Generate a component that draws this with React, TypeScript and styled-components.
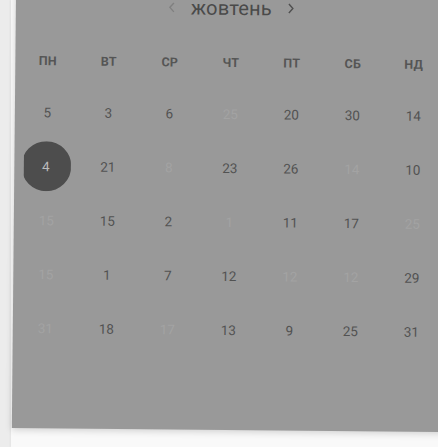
import React from "react";
import styled, { createGlobalStyle } from "styled-components";

const Global = createGlobalStyle`
  html, body { margin: 0; padding: 0; }
  body {
    background: #ececec;
    font-family: Roboto, "Liberation Sans", Arial, sans-serif;
    width: 438px;
    height: 447px;
    overflow: hidden;
  }
`;

const Page = styled.div`
  width: 438px;
  height: 447px;
  overflow: hidden;
  display: flex;
`;

const Sheet = styled.div`
  margin-left: 11px;
  flex: 1;
  background: #f9f9f9;
  box-shadow: -1px 0 2px rgba(0, 0, 0, 0.04);
  display: flex;
  flex-direction: column;
`;

const Panel = styled.div`
  margin-top: -22px;
  margin-left: 3px;
  width: 440px;
  height: 452px;
  padding-left: 2px;
  box-sizing: border-box;
  background: #999999;
  transform: rotate(0.55deg);
  box-shadow: 0 2px 7px rgba(0, 0, 0, 0.16);
  display: flex;
  flex-direction: column;
`;

const TitleRow = styled.div`
  width: 427px;
  height: 60px;
  display: flex;
  align-items: center;
  justify-content: center;
  gap: 15px;
`;

const Title = styled.span`
  font-size: 20px;
  color: #4a4a4a;
  letter-spacing: 0.2px;
  line-height: 1;
  padding-bottom: 1px;
`;

const Arrow = styled.svg<{ $tone: string }>`
  width: 8px;
  height: 12px;
  stroke: ${(p) => p.$tone};
  fill: none;
  stroke-width: 1.4;
`;

const Grid = styled.div<{ $h: number }>`
  display: grid;
  grid-template-columns: repeat(7, 61px);
  grid-auto-rows: ${(p) => p.$h}px;
`;

const WeekDay = styled.div`
  display: flex;
  align-items: center;
  justify-content: center;
  font-size: 12.5px;
  font-weight: 700;
  color: #555555;
  letter-spacing: 0.3px;
`;

const Day = styled.div<{ $faded?: boolean }>`
  display: flex;
  align-items: center;
  justify-content: center;
  font-size: 13.5px;
  color: ${(p) => (p.$faded ? "#a3a3a3" : "#525252")};
`;

const Selected = styled.div`
  width: 50px;
  height: 50px;
  border-radius: 50%;
  background: #4d4d4d;
  color: #bbbbbb;
  display: flex;
  align-items: center;
  justify-content: center;
  font-size: 13.5px;
  clip-path: inset(0 0 0 3px);
  transform: translateX(-1px);
`;

type D = [string, number]; // 0 normal, 1 faded, 2 selected

const weeks: D[][] = [
  [["5", 0], ["3", 0], ["6", 0], ["25", 1], ["20", 0], ["30", 0], ["14", 0]],
  [["4", 2], ["21", 0], ["8", 1], ["23", 0], ["26", 0], ["14", 1], ["10", 0]],
  [["15", 1], ["15", 0], ["2", 0], ["1", 1], ["11", 0], ["17", 0], ["25", 1]],
  [["15", 1], ["1", 0], ["7", 0], ["12", 0], ["12", 1], ["12", 1], ["29", 0]],
  [["31", 1], ["18", 0], ["17", 1], ["13", 0], ["9", 0], ["25", 0], ["31", 0]],
];

const dayNames = ["ПН", "ВТ", "СР", "ЧТ", "ПТ", "СБ", "НД"];

export default function App() {
  return (
    <>
      <Global />
      <Page>
        <Sheet>
          <Panel>
            <TitleRow>
              <Arrow $tone="#808080" viewBox="0 0 8 12">
                <polyline points="6,1.5 2,6 6,10.5" />
              </Arrow>
              <Title>жовтень</Title>
              <Arrow $tone="#505050" viewBox="0 0 8 12">
                <polyline points="2,1.5 6,6 2,10.5" />
              </Arrow>
            </TitleRow>
            <Grid $h={49}>
              {dayNames.map((n) => (
                <WeekDay key={n}>{n}</WeekDay>
              ))}
            </Grid>
            <Grid $h={54}>
              {weeks.flatMap((w, wi) =>
                w.map(([t, k], di) => (
                  <Day key={`${wi}-${di}`} $faded={k === 1}>
                    {k === 2 ? <Selected>{t}</Selected> : t}
                  </Day>
                ))
              )}
            </Grid>
          </Panel>
        </Sheet>
      </Page>
    </>
  );
}
